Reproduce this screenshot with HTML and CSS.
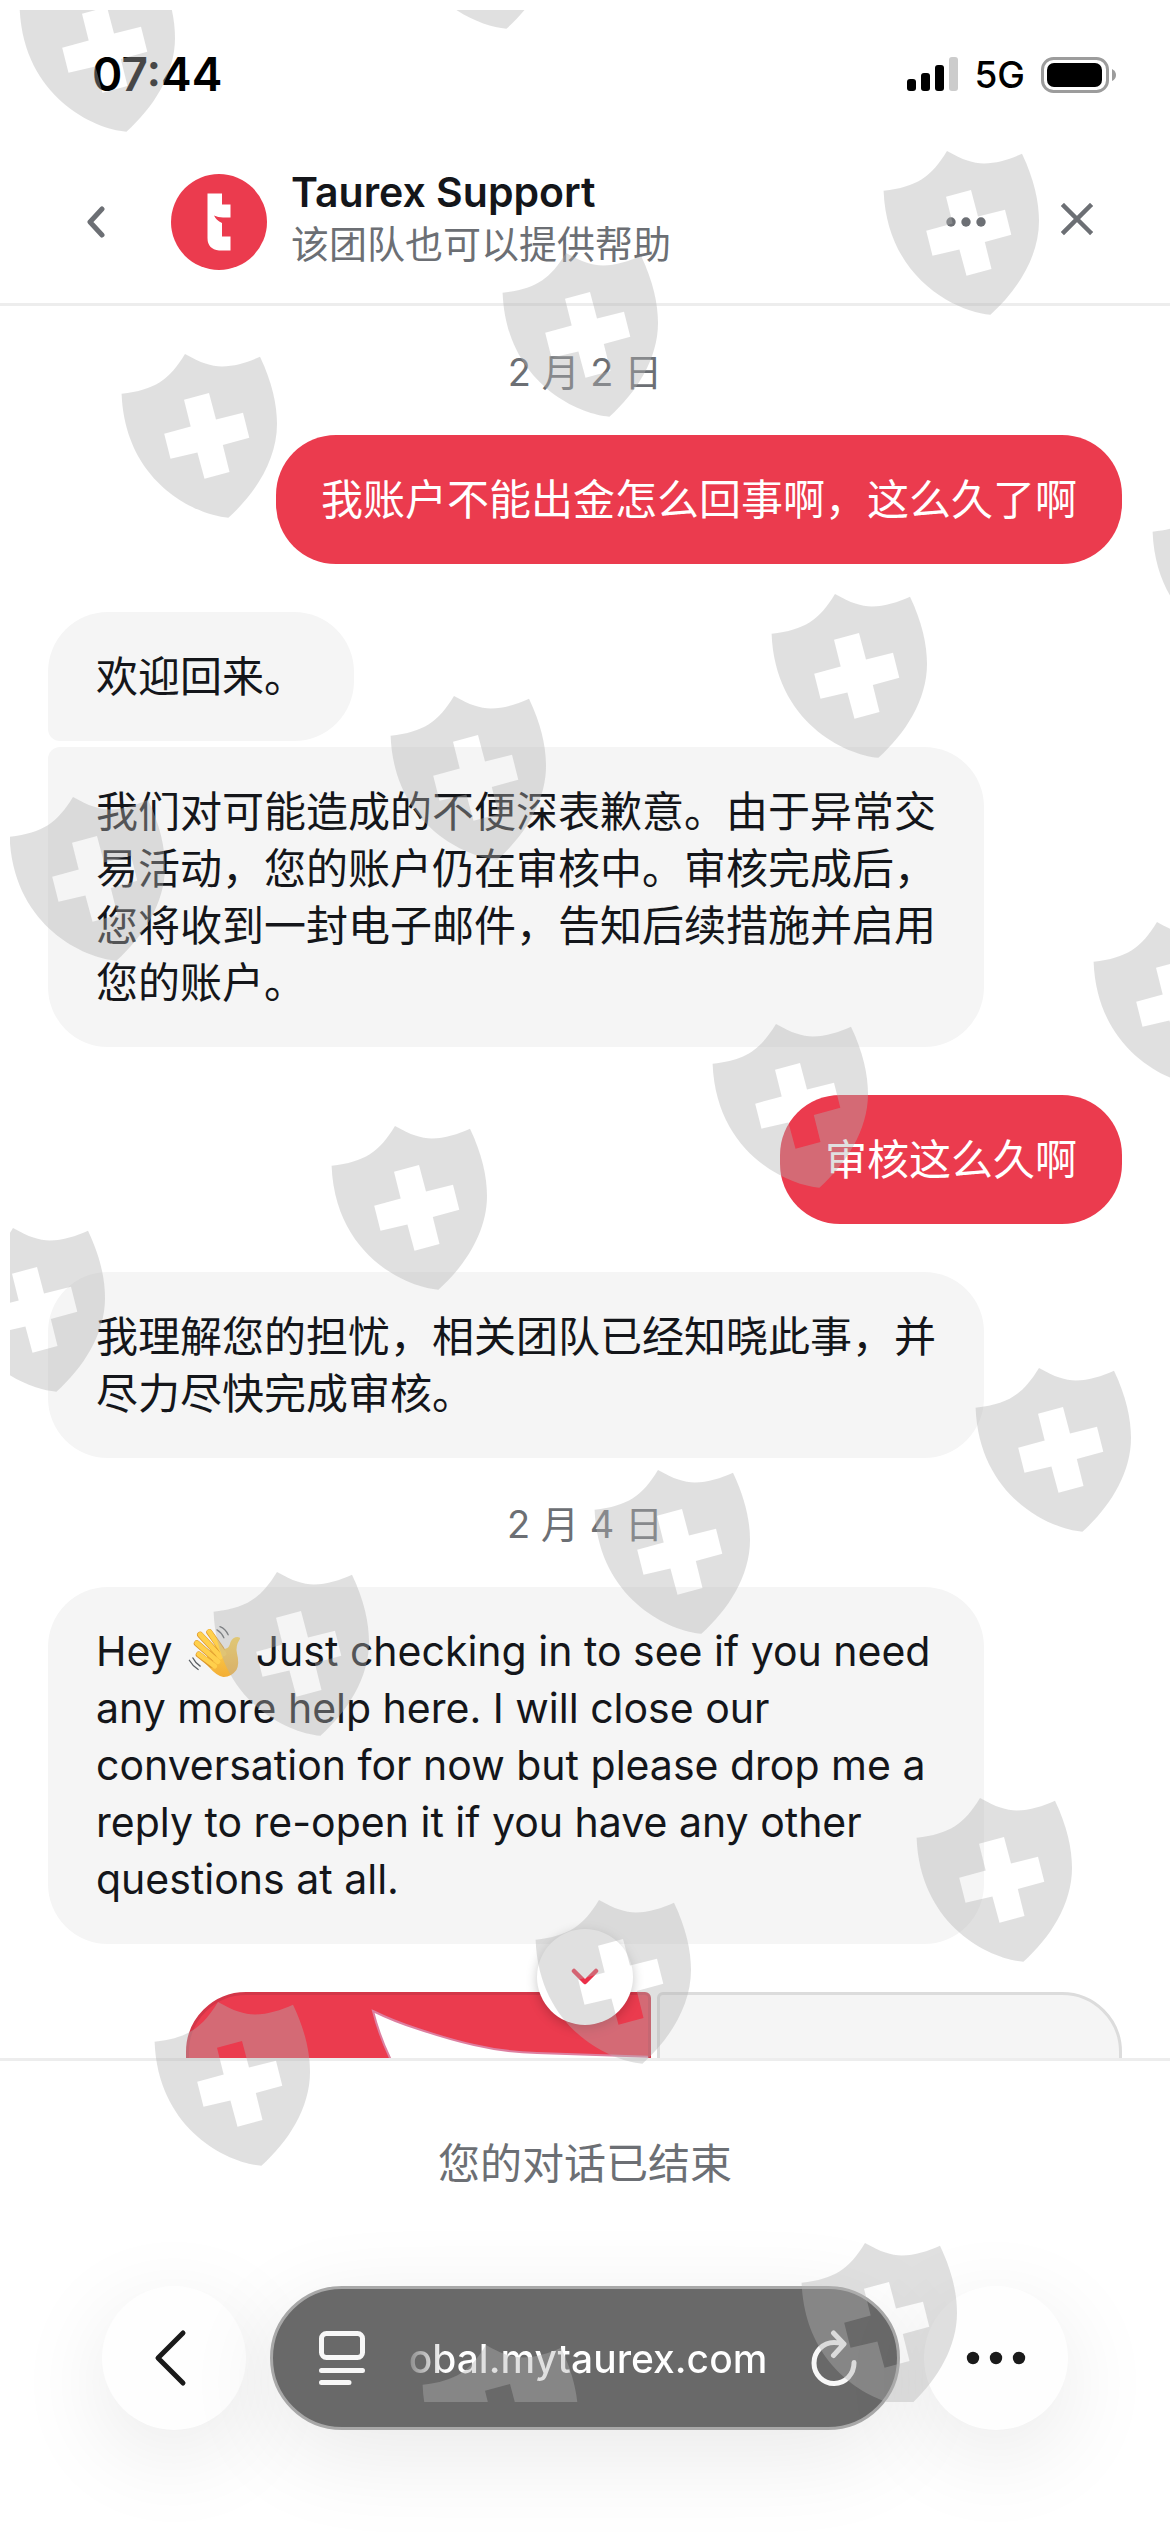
FILE: index.html
```html
<!DOCTYPE html>
<html lang="zh-CN">
<head>
<meta charset="utf-8">
<meta name="viewport" content="width=device-width, initial-scale=1">
<title>Taurex Support</title>
<link rel="stylesheet" href="styles.css">
</head>
<body>
<div class="page">
  <div class="status-bar">
    <time class="clock">07:44</time>
    <div class="status-icons">
      <svg class="signal" width="51" height="35" viewBox="0 0 51 35" aria-hidden="true">
        <rect x="0" y="22" width="9" height="12" rx="3"/>
        <rect x="14" y="16" width="9" height="18" rx="3"/>
        <rect x="28" y="8" width="9" height="26" rx="3"/>
        <rect x="42" y="0" width="9" height="34" rx="3" fill="#ccc"/>
      </svg>
      <span class="network">5G</span>
      <svg class="battery" width="75" height="36" viewBox="0 0 75 36" aria-hidden="true">
        <rect x="1.5" y="1.5" width="65" height="33" rx="11" fill="none" stroke="#9c9c9c" stroke-width="3"/>
        <rect x="6" y="6" width="55" height="24" rx="7"/>
        <path d="M71 12 Q75 14 75 18 Q75 22 71 24 Z" fill="#9c9c9c"/>
      </svg>
    </div>
  </div>

  <header class="chat-header">
    <button class="icon-button" type="button" aria-label="返回">
      <svg width="20" height="32" viewBox="0 0 20 32" aria-hidden="true"><path d="M16 3 L4 16 L16 29" fill="none" stroke="#6c6f74" stroke-width="5" stroke-linecap="round" stroke-linejoin="round"/></svg>
    </button>
    <svg class="avatar" width="96" height="96" viewBox="0 0 96 96" role="img" aria-label="Taurex">
      <circle cx="48" cy="48" r="48" fill="#eb3b4e"/>
      <path d="M36.500 19.500 H51 V30.500 H59.500 V43.500 H52 Q47 43.500 43 41.500 Q45 46 51 49 V62.500 H59.500 V76.500 H48 Q36.500 75 36.500 64 Z" fill="#fff"/>
    </svg>
    <div class="heading">
      <h1 class="title">Taurex Support</h1>
      <p class="subtitle">该团队也可以提供帮助</p>
    </div>
    <button class="icon-button" type="button" aria-label="更多">
      <svg width="40" height="10" viewBox="0 0 40 10" fill="#6c6f74" aria-hidden="true"><circle cx="5" cy="5" r="4.700"/><circle cx="20" cy="5" r="4.700"/><circle cx="35" cy="5" r="4.700"/></svg>
    </button>
    <button class="icon-button" type="button" aria-label="关闭">
      <svg width="32" height="38" viewBox="0 0 32 38" aria-hidden="true"><path d="M3 3 L29 29 M29 3 L3 29" fill="none" stroke="#6c6f74" stroke-width="4.500" stroke-linecap="square"/></svg>
    </button>
  </header>

  <main class="thread">
    <p class="date">2 月 2 日</p>
    <div class="group sent"><p class="bubble">我账户不能出金怎么回事啊，这么久了啊</p></div>
    <div class="group received">
      <p class="bubble first">欢迎回来。</p>
      <p class="bubble last">我们对可能造成的不便深表歉意。由于异常交易活动，您的账户仍在审核中。审核完成后，您将收到一封电子邮件，告知后续措施并启用您的账户。</p>
    </div>
    <div class="group sent"><p class="bubble">审核这么久啊</p></div>
    <div class="group received"><p class="bubble">我理解您的担忧，相关团队已经知晓此事，并尽力尽快完成审核。</p></div>
    <p class="date">2 月 4 日</p>
    <div class="group received">
      <p class="bubble latin">Hey <svg class="wave" width="54" height="54" viewBox="18 22 164 164" role="img" aria-label="挥手">
        <defs><linearGradient id="skin" x1="0" y1="0" x2="0" y2="1"><stop offset="0" stop-color="#ffd64f"/><stop offset="1" stop-color="#f3ae36"/></linearGradient></defs>
        <path d="M92 92 L118 80 L128 98 Q143 98 148 84 Q152 66 165 62 Q180 60 179 67 Q164 90 170 112 Q178 142 168 162 Q152 184 128 183 Q108 180 84 152 L72 138 Z" fill="url(#skin)"/>
        <g fill="none" stroke-linecap="round"><g stroke="#dc962c" stroke-width="19"><path d="M54 115 L92 145"/><path d="M48 81 L98 124"/><path d="M58 55 L108 108"/><path d="M86 47 L122 98"/></g>
        <g stroke="#ffd04c" stroke-width="15"><path d="M54 114 L102 150"/><path d="M48 80 L112 136"/><path d="M58 54 L120 122"/><path d="M86 46 L130 112"/></g>
        <g stroke="#5b6065" stroke-width="4"><path d="M118 30 Q135 36 143 55 M109 40 Q123 48 130 64 M36 125 Q42 138 58 150 M25 132 Q34 148 52 160"/></g></g>
      </svg> Just checking in to see if you need any more help here. I will close our conversation for now but please drop me a reply to re-open it if you have any other questions at all.</p>
    </div>
    <div class="rating">
      <div class="card brand">
        <svg class="swoosh" width="465" height="180" viewBox="0 0 465 180" aria-hidden="true"><path d="M184 16 Q204 26 229 34 Q262 45 285 50 Q315 57 348 58 Q400 60 465 62 L465 180 L230 180 Q212 110 201 63 Q190 40 184 16 Z" fill="#fff" stroke="#dd7fa0" stroke-width="2"/></svg>
      </div>
      <div class="card"></div>
    </div>
    <button class="scroll-down" type="button" aria-label="滚动到底部">
      <svg width="28" height="18" viewBox="0 0 28 18" aria-hidden="true"><path d="M3 3 L14 14 L25 3" fill="none" stroke="#eb2f48" stroke-width="4.500" stroke-linecap="round" stroke-linejoin="round"/></svg>
    </button>
  </main>

  <footer class="ended"><p>您的对话已结束</p></footer>

  <nav class="browser-bar">
    <button class="round" type="button" aria-label="后退">
      <svg width="42" height="58" viewBox="0 0 42 58" aria-hidden="true"><path d="M30 4 L5 29 L30 54" fill="none" stroke="#1a1a1a" stroke-width="5" stroke-linecap="round" stroke-linejoin="round"/></svg>
    </button>
    <div class="address">
      <button class="plain" type="button" aria-label="页面菜单">
        <svg width="46" height="54" viewBox="0 0 46 54" fill="none" stroke="#f7f7f7" stroke-width="5" stroke-linecap="round" aria-hidden="true"><rect x="2.500" y="2.500" width="41" height="24" rx="5"/><path d="M2.500 39.500 H43.500 M2.500 51.500 H30"/></svg>
      </button>
      <a class="url" href="#">obal.mytaurex.com</a>
      <button class="plain" type="button" aria-label="重新加载">
        <svg width="46" height="56" viewBox="0 0 46 56" fill="none" stroke="#f7f7f7" stroke-width="5" stroke-linecap="round" stroke-linejoin="round" aria-hidden="true"><path d="M43 32.500 A20 20.500 0 1 1 23 12.500 Q28 12.500 32 14 M22.500 3 L33 14 L22.500 25.500"/></svg>
      </button>
    </div>
    <button class="round" type="button" aria-label="更多选项">
      <svg width="60" height="14" viewBox="0 0 60 14" fill="#1a1a1a" aria-hidden="true"><circle cx="7" cy="7" r="6.200"/><circle cx="30" cy="7" r="6.200"/><circle cx="53" cy="7" r="6.200"/></svg>
    </button>
  </nav>

  <svg class="watermark" aria-hidden="true">
    <defs>
      <path id="shield" fill-rule="evenodd" d="M0 0 C16 9 26 12.400 37 12.400 C50 12.400 63 8 75 2.700 C87 28 92 50 92 70 C92 106 70 140 43.400 163.700 C10 161 -60 128 -63.400 39.700 C-30 36 -16 26 0 0 Z M-1 45.700 L5.700 72.400 L-20.800 79.700 L-14.500 104.700 L12.400 98.400 L19.500 124.700 L44.500 118 L37.800 91 L64.300 83.700 L58 58.700 L31 65.400 L24 39 Z"/>
    </defs>
    <g transform="translate(-10 -10)">
      <use href="#shield" x="83" y="-32"/><use href="#shield" x="463" y="-135"/>
      <use href="#shield" x="947" y="151"/><use href="#shield" x="566" y="253"/><use href="#shield" x="185" y="354"/>
      <use href="#shield" x="1216" y="492"/><use href="#shield" x="835" y="594"/><use href="#shield" x="454" y="696"/><use href="#shield" x="73" y="797"/>
      <use href="#shield" x="1157" y="922"/><use href="#shield" x="776" y="1024"/><use href="#shield" x="395" y="1126"/><use href="#shield" x="13" y="1228"/>
      <use href="#shield" x="1039" y="1368"/><use href="#shield" x="658" y="1470"/><use href="#shield" x="277" y="1572"/>
      <use href="#shield" x="980" y="1798"/><use href="#shield" x="599" y="1900"/><use href="#shield" x="218" y="2002"/>
      <use href="#shield" x="865" y="2243"/><use href="#shield" x="486" y="2345"/>
    </g>
  </svg>
</div>
</body>
</html>
```
FILE: styles.css
```css
* {
  box-sizing: border-box;
}

body,
h1,
p {
  margin: 0;
}

body {
  background: #fff;
  color: #14161a;
  font-family: Inter, "Noto Sans CJK SC", sans-serif;
  font-size: 42px;
  line-height: 57px;
}

button {
  border: 0;
  padding: 0;
  background: none;
  font: inherit;
}

svg {
  flex: none;
}

.page {
  position: relative;
  display: flex;
  flex-direction: column;
  height: 100vh;
  overflow: hidden;
}

/* Status bar */
.status-bar {
  display: flex;
  align-items: center;
  justify-content: space-between;
  padding: 46px 54px 38px 92px;
  color: #000;
}

.clock {
  font-size: 46px;
  font-weight: 600;
}

.status-icons {
  display: flex;
  align-items: center;
  gap: 16px;
}

.network {
  font-size: 37px;
  font-weight: 500;
}

/* Chat header */
.chat-header {
  display: flex;
  align-items: center;
  padding: 26px 45px 26px 48px;
  border-bottom: 3px solid #ededed;
}

.icon-button {
  display: flex;
  align-items: center;
  justify-content: center;
  width: 96px;
  height: 96px;
}

.icon-button + .icon-button {
  margin-left: 15px;
}

.avatar {
  margin: 0 24px 0 27px;
}

.heading {
  flex: 1;
  min-width: 0;
  padding-bottom: 6px;
}

.title {
  font-size: 41px;
  font-weight: 600;
  line-height: 50px;
}

.subtitle {
  color: #6c6f74;
  font-size: 38px;
  line-height: 54px;
}

/* Conversation */
.thread {
  position: relative;
  flex: 1;
  min-height: 0;
  overflow: hidden;
  padding: 0 48px;
}

.date {
  padding: 38px 0 34px;
  color: #6c6f74;
  font-size: 38px;
  text-align: center;
}

.group {
  display: flex;
  flex-direction: column;
  gap: 6px;
  margin-bottom: 48px;
}

.sent {
  align-items: flex-end;
}

.received {
  align-items: flex-start;
}

.group:has(+ .date) {
  margin-bottom: 0;
}

.bubble {
  max-width: 936px;
  padding: 36px 48px;
  border-radius: 60px;
  background: #f5f5f5;
}

.sent .bubble {
  padding: 36px 45px;
  background: #eb3b4e;
  color: #fff;
}

.bubble.first {
  border-bottom-left-radius: 12px;
}

.bubble.last {
  border-top-left-radius: 12px;
}

.latin {
  font-size: 41px;
}

.wave {
  margin: 0 3px;
  vertical-align: -12px;
}

.rating {
  display: flex;
  gap: 6px;
  margin-left: 138px;
}

.card {
  position: relative;
  flex: 1;
  height: 180px;
  overflow: hidden;
  border: 3px solid #dcdcdc;
  border-radius: 6px 60px 60px 6px;
  background: #f5f5f5;
}

.brand {
  border-color: #d33648;
  border-radius: 60px 6px 6px 60px;
  background: #eb3b4e;
}

.swoosh {
  display: block;
}

.scroll-down {
  position: absolute;
  bottom: 33px;
  left: 50%;
  display: flex;
  align-items: center;
  justify-content: center;
  width: 96px;
  height: 96px;
  margin-left: -48px;
  border-radius: 50%;
  background: #fff;
  box-shadow: 0 3px 12px rgba(0, 0, 0, 0.22);
}

/* Footer */
.ended {
  padding: 74px 48px 94px;
  border-top: 3px solid #ededed;
  color: #6c6f74;
  text-align: center;
}

.browser-bar {
  display: flex;
  gap: 24px;
  padding: 0 102px 102px;
}

.round {
  display: flex;
  align-items: center;
  justify-content: center;
  width: 144px;
  height: 144px;
  border-radius: 50%;
  background: #fefefe;
  box-shadow: 0 24px 96px rgba(0, 0, 0, 0.09);
}

.address {
  display: flex;
  flex: 1;
  align-items: center;
  justify-content: space-between;
  min-width: 0;
  padding: 0 40px 0 46px;
  border: 3px solid #a8a8a8;
  border-radius: 72px;
  background: #696969;
  box-shadow: 0 24px 96px rgba(0, 0, 0, 0.09);
}

.plain {
  display: flex;
}

.url {
  overflow: hidden;
  background: linear-gradient(90deg, #8c8c8c, #fff 36px);
  background-clip: text;
  color: transparent;
  font-size: 39px;
  font-weight: 500;
  text-decoration: none;
  white-space: nowrap;
}

/* Shield pattern laid over the whole screen */
.watermark {
  position: absolute;
  top: 10px;
  left: 10px;
  width: calc(100% - 10px);
  height: calc(100% - 140px);
  overflow: hidden;
  fill: rgba(178, 178, 178, 0.4);
  pointer-events: none;
}
```
